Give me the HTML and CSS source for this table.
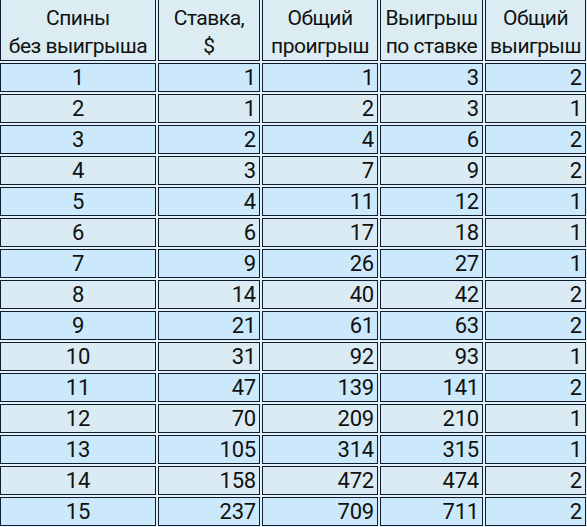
FILE: index.html
```html
<!DOCTYPE html>
<html lang="ru">
<head>
<meta charset="utf-8">
<title>Таблица</title>
<link rel="stylesheet" href="styles.css">
</head>
<body>
<table class="grid">
  <colgroup>
    <col class="c1"><col class="c2"><col class="c3"><col class="c4"><col class="c5">
  </colgroup>
  <thead>
    <tr>
      <th>Спины<br>без выигрыша</th>
      <th>Ставка,<br>$</th>
      <th>Общий<br>проигрыш</th>
      <th>Выигрыш<br>по ставке</th>
      <th>Общий<br>выигрыш</th>
    </tr>
  </thead>
  <tbody>
    <tr class="odd"><td>1</td><td>1</td><td>1</td><td>3</td><td>2</td></tr>
    <tr class="even"><td>2</td><td>1</td><td>2</td><td>3</td><td>1</td></tr>
    <tr class="odd"><td>3</td><td>2</td><td>4</td><td>6</td><td>2</td></tr>
    <tr class="even"><td>4</td><td>3</td><td>7</td><td>9</td><td>2</td></tr>
    <tr class="odd"><td>5</td><td>4</td><td>11</td><td>12</td><td>1</td></tr>
    <tr class="even"><td>6</td><td>6</td><td>17</td><td>18</td><td>1</td></tr>
    <tr class="odd"><td>7</td><td>9</td><td>26</td><td>27</td><td>1</td></tr>
    <tr class="even"><td>8</td><td>14</td><td>40</td><td>42</td><td>2</td></tr>
    <tr class="odd"><td>9</td><td>21</td><td>61</td><td>63</td><td>2</td></tr>
    <tr class="even"><td>10</td><td>31</td><td>92</td><td>93</td><td>1</td></tr>
    <tr class="odd"><td>11</td><td>47</td><td>139</td><td>141</td><td>2</td></tr>
    <tr class="even"><td>12</td><td>70</td><td>209</td><td>210</td><td>1</td></tr>
    <tr class="odd"><td>13</td><td>105</td><td>314</td><td>315</td><td>1</td></tr>
    <tr class="even"><td>14</td><td>158</td><td>472</td><td>474</td><td>2</td></tr>
    <tr class="odd"><td>15</td><td>237</td><td>709</td><td>711</td><td>2</td></tr>
  </tbody>
</table>
</body>
</html>
```
FILE: styles.css
```css
html, body {
  margin: 0;
  padding: 0;
  background: #e4f1f7;
  overflow: hidden;
}
.grid {
  margin: -4px 0 0 -2px;
  width: 590px;
  table-layout: fixed;
  border-collapse: separate;
  border-spacing: 2px;
  font-family: Roboto, "Open Sans", sans-serif;
  font-size: 22px;
  letter-spacing: -0.2px;
  color: #111;
}
.c1 { width: 156px; }
.c2 { width: 102px; }
.c3 { width: 116px; }
.c4 { width: 103px; }
.c5 { width: 101px; }
.grid th, .grid td {
  box-sizing: border-box;
  border: 1px solid #0e1d30;
  white-space: nowrap;
  overflow: hidden;
}
.grid th {
  background: #dbedf3;
  font-weight: normal;
  font-size: 21px;
  letter-spacing: -0.5px;
  padding: 5px 0 0;
  line-height: 28px;
  text-align: center;
  vertical-align: top;
}
.grid td {
  padding: 0 3px 0 0;
  height: 29px;
  line-height: 27px;
  text-align: right;
}
.grid td:first-child {
  text-align: center;
  padding: 0;
}
.odd td { background: #cbe9fb; }
.even td { background: #dbebf3; }
```
